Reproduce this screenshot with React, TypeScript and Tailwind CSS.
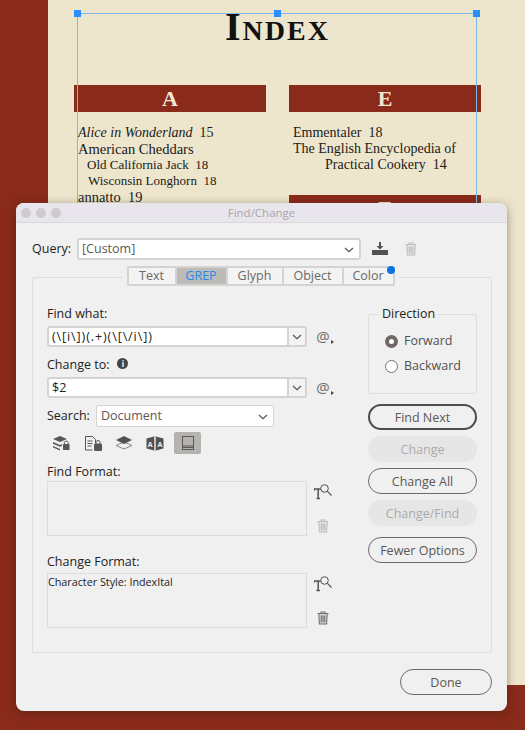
import type { ReactNode } from "react";

const uiFont = "font-['Open_Sans',sans-serif]";
const docFont = "font-['Liberation_Serif',serif]";

function Chevron({ className = "" }: { className?: string }) {
	return (
		<svg viewBox="0 0 10 6" className={`h-[6px] w-[10px] ${className}`} fill="none" stroke="#555" strokeWidth="1.2">
			<path d="M1 1l4 3.6L9 1" />
		</svg>
	);
}

function TrashIcon({ color = "#77736f" }: { color?: string }) {
	return (
		<svg viewBox="0 0 12 14" className="h-[14px] w-[12px]" fill="none" stroke={color} strokeWidth="1.1">
			<path d="M0.5 2.5h11M4 2.5V1h4v1.5" />
			<path d="M1.8 2.5l.6 10.5h7.2l.6-10.5z" fill={color} fillOpacity="0.25" />
			<path d="M4.3 4.5v6.8M6 4.5v6.8M7.7 4.5v6.8" />
		</svg>
	);
}

function FormatIcon() {
	return (
		<svg viewBox="0 0 18 16" className="h-[16px] w-[18px]" fill="none" stroke="#55514e">
			<path d="M0.500 6.500V5h7.500v1.500M4.200 5v9.500M2.500 14.500h3.400" strokeWidth="1.5" />
			<circle cx="10.500" cy="4.500" r="3.800" strokeWidth="1" fill="#f0f0f0" />
			<path d="M13.200 7.200l4.300 4.300" strokeWidth="1.1" />
		</svg>
	);
}

function AtButton() {
	return (
		<div className="relative flex w-[20px] items-center justify-center text-[15px] leading-none text-[#6d6966]">
			@
			<span className="absolute bottom-[3px] right-[-1px] h-0 w-0 border-y-[2px] border-l-[3px] border-y-transparent border-l-[#444]" />
		</div>
	);
}

function ComboInput({ value, className = "" }: { value: string; className?: string }) {
	return (
		<div className="flex h-[21px] w-[260px] rounded-[3px] border-2 border-[#d3d3d3] bg-white">
			<div className={`flex-1 pl-[3px] text-[12.5px] leading-[17px] text-[#222] ${className}`}>{value}</div>
			<div className="flex w-[18px] items-center justify-center border-l-2 border-[#d3d3d3] bg-[#f3f3f3]">
				<Chevron />
			</div>
		</div>
	);
}

function Radio({ checked, label }: { checked?: boolean; label: string }) {
	return (
		<div className="flex h-[15px] items-center gap-[6px] text-[12.5px] text-[#55514e]">
			{checked ? (
				<span className="flex h-[13px] w-[13px] items-center justify-center rounded-full bg-[#6f6865]">
					<span className="h-[5px] w-[5px] rounded-full bg-white" />
				</span>
			) : (
				<span className="h-[13px] w-[13px] rounded-full border border-[#77716e] bg-white" />
			)}
			{label}
		</div>
	);
}

function PillButton({ label, variant = "normal", className = "w-[109px]" }: { label: string; variant?: "normal" | "primary" | "disabled"; className?: string }) {
	const styles = {
		normal: "border border-[#6f6a67] text-[#5b5754]",
		primary: "border-2 border-[#4f4b48] text-[#5b5754]",
		disabled: "bg-[#e6e6e6] text-[#ababab]",
	};
	return (
		<div className={`flex h-[26px] items-center justify-center rounded-[13px] pt-[2px] text-[12.5px] ${styles[variant]} ${className}`}>
			{label}
		</div>
	);
}

function FormatBox({ children }: { children?: ReactNode }) {
	return (
		<div className="h-[55px] w-[260px] border border-[#dcdcdc] text-[10.75px] leading-[16px] text-[#222]">
			{children}
		</div>
	);
}

const tabs = ["Text", "GREP", "Glyph", "Object", "Color"];
const tabWidths = ["w-[46px]", "w-[51px]", "w-[56px]", "w-[60px]", "w-[51px]"];

function SearchIcons() {
	return (
		<div className="mt-[5px] flex h-[22px] items-center">
			<svg viewBox="0 0 18 15" className="ml-[5px] h-[15px] w-[18px]" fill="#5a5552">
				<path d="M8 0l7 3-7 3-7-3zM1 6l7 3 2-.8V10l-2 .8-7-3zM1 10l7 3v1.500L1 11.500z" />
				<rect x="11" y="8" width="6.500" height="6" rx="0.500" />
				<path d="M12.400 8V6.500a1.900 1.900 0 013.700 0V8" fill="none" stroke="#5a5552" />
			</svg>
			<svg viewBox="0 0 18 15" className="ml-[14px] h-[15px] w-[18px]" fill="none" stroke="#5a5552">
				<path d="M1.500.5h7l3 3V7M1.500.5v13.500h7" />
				<path d="M3.500 5h5M3.500 7.500h5M3.500 10h4" />
				<rect x="10.500" y="8" width="7" height="6.500" rx="0.500" fill="#5a5552" />
				<path d="M12 8V6.500a2 2 0 014 0V8" />
			</svg>
			<svg viewBox="0 0 18 14" className="ml-[13px] h-[14px] w-[18px]">
				<path d="M9 6l8 3.500-8 3.500-8-3.500z" fill="none" stroke="#8a8683" />
				<path d="M9 0l8 4-8 4-8-4z" fill="#55514e" />
			</svg>
			<svg viewBox="0 0 18 15" className="ml-[13px] h-[15px] w-[18px]" fill="#55514e">
				<path d="M0.500 2.500L8 0.500v14l-7.500-2zM17.500 2.500L10 0.500v14l7.500-2z" />
				<path d="M9 0v15" stroke="#9a9693" />
				<text x="4.200" y="11" fontSize="7" fontWeight="700" textAnchor="middle" fill="#f0f0f0">A</text>
				<text x="13.800" y="11" fontSize="7" fontWeight="700" textAnchor="middle" fill="#f0f0f0">A</text>
			</svg>
			<div className="ml-[10px] flex h-[22px] w-[27px] items-center justify-center rounded-[2px] bg-[#b5b3b0]">
				<svg viewBox="0 0 12 14" className="h-[14px] w-[12px]" fill="none" stroke="#5d5956">
					<rect x="0.500" y="0.500" width="11" height="13" />
					<path d="M0.500 10h11M0.500 11.500h11" />
				</svg>
			</div>
		</div>
	);
}

function Dialog() {
	return (
		<div className={`absolute left-[16px] top-[203px] flex h-[508px] w-[491px] flex-col overflow-hidden rounded-[8px] bg-[#f0f0f0] shadow-[0_2px_10px_rgba(50,30,10,0.45)] ${uiFont}`}>
			{/* Title bar */}
			<div className="relative flex h-[20px] shrink-0 items-center justify-center border-b border-[#dad7db] bg-[#e9e5ec] text-[11.5px] text-[#a9a6aa]">
				<div className="absolute left-[5px] top-[5px] flex gap-[5px]">
					<span className="h-[10px] w-[10px] rounded-full bg-[#cdcbcd]" />
					<span className="h-[10px] w-[10px] rounded-full bg-[#cdcbcd]" />
					<span className="h-[10px] w-[10px] rounded-full bg-[#cdcbcd]" />
				</div>
				Find/Change
			</div>

			{/* Query */}
			<div className="mt-[15px] flex h-[22px] items-center pl-[16px]">
				<span className="w-[45px] pt-[1px] text-[12.5px] text-[#222]">Query:</span>
				<div className="flex h-[22px] w-[284px] items-center justify-between rounded-[3px] border-2 border-[#d3d3d3] bg-white pl-[3px] pr-[5px] pt-[1px] text-[12.5px] text-[#5c5855]">
					[Custom]
					<Chevron />
				</div>
				<svg viewBox="0 0 16 14" className="ml-[11px] h-[14px] w-[16px]" fill="#55514e">
					<path d="M7 0h2v4h2.500L8 7.500 4.500 4H7z" />
					<path d="M0 8h16v5H0z" />
				</svg>
				<div className="ml-[17px] opacity-50">
					<TrashIcon color="#8f8c8a" />
				</div>
			</div>

			{/* Tabs sit on the top border of the group box */}
			<div className="relative z-10 mt-[6px] flex justify-center pr-[2px] -mb-[9px]">
				<div className="relative flex bg-[#f0f0f0] px-[4px]">
					<div className="flex h-[20px] rounded-[2px] border-2 border-[#d3d3d3] bg-[#f3f3f3] pt-0 text-[12.5px] text-[#6c6865]">
						{tabs.map((tab, i) => (
							<div
								key={tab}
								className={`flex items-center justify-center pt-[1px] ${tabWidths[i]} ${i > 0 ? "border-l-2 border-[#d3d3d3]" : ""} ${tab === "GREP" ? "bg-[#bcbbb8] text-[#1f8af0]" : ""}`}
							>
								{tab}
							</div>
						))}
					</div>
					<span className="absolute right-[4px] top-0 h-[8px] w-[8px] rounded-full bg-[#0b72e6]" />
				</div>
			</div>

			{/* Group box */}
			<div className="ml-[16px] mr-[15px] flex h-[376px] justify-between rounded-[2px] border border-[#dedede] pl-[14px] pr-[14px] pt-[27px]">
				<div className="w-[290px]">
					<div className="text-[12.5px] leading-[18px] text-[#222]">Find what:</div>
					<div className="mt-[3px] flex gap-[6px]">
						<ComboInput value="(\[i\])(.+)(\[\/i\])" className="tracking-[0.9px]" />
						<AtButton />
					</div>

					<div className="mt-[9px] flex items-center gap-[8px] text-[12.5px] leading-[18px] text-[#222]">
						Change to:
						<span className="-mt-[3px] flex h-[11px] w-[11px] items-center justify-center rounded-full bg-[#444] text-[8px] font-bold text-white">i</span>
					</div>
					<div className="mt-[3px] flex gap-[6px]">
						<ComboInput value="$2" />
						<AtButton />
					</div>

					<div className="mt-[7px] flex h-[22px] items-center">
						<span className="w-[49px] pt-[1px] text-[12.5px] text-[#222]">Search:</span>
						<div className="flex h-[22px] w-[178px] items-center justify-between rounded-[2px] border border-[#d3d3d3] bg-white pl-[4px] pr-[5px] pt-[1px] text-[12.5px] text-[#5c5855]">
							Document
							<Chevron />
						</div>
					</div>

					<SearchIcons />

					<div className="mt-[9px] text-[12.5px] leading-[18px] text-[#222]">Find Format:</div>
					<div className="flex">
						<FormatBox />
						<div className="flex w-[30px] flex-col items-center pl-[2px] pt-[3px]">
							<FormatIcon />
							<div className="mt-[19px] opacity-50">
								<TrashIcon color="#8f8c8a" />
							</div>
						</div>
					</div>

					<div className="mt-[17px] text-[12.5px] leading-[18px] text-[#222]">Change Format:</div>
					<div className="mt-[2px] flex">
						<FormatBox>Character Style: IndexItal</FormatBox>
						<div className="flex w-[30px] flex-col items-center pl-[2px] pt-[3px]">
							<FormatIcon />
							<div className="mt-[19px]">
								<TrashIcon />
							</div>
						</div>
					</div>
				</div>

				{/* Right column */}
				<div className="flex w-[109px] flex-col">
					<fieldset className="mt-[1px] h-[88px] rounded-[2px] border border-[#dedede] pl-[16px]">
						<legend className="-ml-[6px] px-[3px] text-[12.5px] leading-[16px] text-[#222]">Direction</legend>
						<div className="mt-[12px] flex flex-col gap-[10px]">
							<Radio checked label="Forward" />
							<Radio label="Backward" />
						</div>
					</fieldset>
					<div className="mt-[10px] flex flex-col gap-[6px]">
						<PillButton label="Find Next" variant="primary" />
						<PillButton label="Change" variant="disabled" />
						<PillButton label="Change All" />
						<PillButton label="Change/Find" variant="disabled" />
						<PillButton label="Fewer Options" className="mt-[5px] w-[109px]" />
					</div>
				</div>
			</div>

			<div className="mt-[16px] flex justify-end pr-[15px]">
				<PillButton label="Done" className="w-[92px]" />
			</div>
		</div>
	);
}

function IndexEntry({ children, className = "" }: { children: ReactNode; className?: string }) {
	return <div className={`whitespace-nowrap ${className}`}>{children}</div>;
}

function LetterBar({ letter }: { letter: string }) {
	return (
		<div className={`flex h-[27px] items-center justify-center bg-[#8a2a1b] text-[22px] font-bold leading-none text-[#efe8d2] ${docFont}`}>
			{letter}
		</div>
	);
}

export default function App() {
	return (
		<div className="relative h-[730px] w-[525px] overflow-hidden bg-[#8a2a1b]">
			{/* Document page */}
			<div className={`ml-[48px] h-[685px] bg-[#ede6cd] text-[#1a1a1a] ${docFont}`}>
				<h1 className="pr-[18px] pt-[4px] text-center text-[40px] font-bold leading-[46px] tracking-[2px] text-[#111] [font-variant:small-caps]">
					Index
				</h1>
				<div className="ml-[26px] mt-[35px] grid w-[407px] grid-cols-[192px_192px] gap-x-[23px]">
					<div>
						<LetterBar letter="A" />
						<div className="mt-[13px] pl-[4px] text-[14.5px] leading-[16px]">
							<IndexEntry className="text-[14px]"><i>Alice in Wonderland</i>&nbsp; 15</IndexEntry>
							<IndexEntry>American Cheddars</IndexEntry>
							<IndexEntry className="pl-[9px] text-[13px]">Old California Jack&nbsp; 18</IndexEntry>
							<IndexEntry className="pl-[10px] text-[13px]">Wisconsin Longhorn&nbsp; 18</IndexEntry>
							<IndexEntry>annatto&nbsp; 19</IndexEntry>
						</div>
					</div>
					<div>
						<LetterBar letter="E" />
						<div className="mt-[13px] pl-[4px] text-[14px] leading-[16px]">
							<IndexEntry>Emmentaler&nbsp; 18</IndexEntry>
							<IndexEntry>The English Encyclopedia of</IndexEntry>
							<IndexEntry className="pl-[32px]">Practical Cookery&nbsp; 14</IndexEntry>
						</div>
						<div className="mt-[22px]">
							<LetterBar letter="F" />
						</div>
					</div>
				</div>
			</div>

			{/* Selected text frame */}
			<div className="absolute left-[77px] top-[13px] h-[200px] w-[400px] border border-b-0 border-[#7db8ec]">
				<span className="absolute -left-[4px] -top-[4px] h-[7px] w-[7px] bg-[#2a8ffa]" />
				<span className="absolute left-[196px] -top-[4px] h-[7px] w-[7px] bg-[#2a8ffa]" />
				<span className="absolute -right-[4px] -top-[4px] h-[7px] w-[7px] bg-[#2a8ffa]" />
			</div>

			<Dialog />
		</div>
	);
}
